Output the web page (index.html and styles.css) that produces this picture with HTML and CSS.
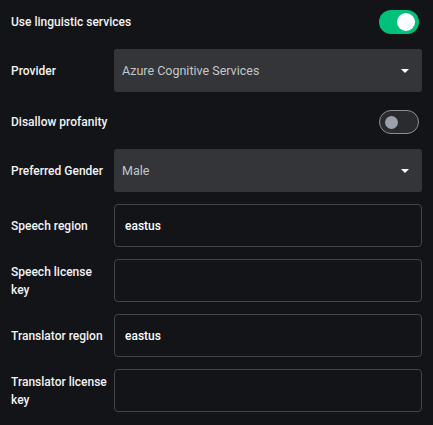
FILE: index.html
```html
<!DOCTYPE html>
<html>
<head>
<meta charset="utf-8">
<link rel="stylesheet" href="styles.css">
</head>
<body>
<div class="panel">
  <div class="row toggle-row">
    <span class="label wide">Use linguistic services</span>
    <span class="switch on"><span class="knob"></span></span>
  </div>
  <div class="row field-row">
    <span class="label">Provider</span>
    <div class="select"><span class="value">Azure Cognitive Services</span><span class="arrow"></span></div>
  </div>
  <div class="row toggle-row">
    <span class="label wide">Disallow profanity</span>
    <span class="switch off"><span class="knob"></span></span>
  </div>
  <div class="row field-row">
    <span class="label">Preferred Gender</span>
    <div class="select"><span class="value">Male</span><span class="arrow"></span></div>
  </div>
  <div class="row field-row">
    <span class="label">Speech region</span>
    <div class="input"><span class="value">eastus</span></div>
  </div>
  <div class="row field-row">
    <span class="label">Speech license key</span>
    <div class="input"></div>
  </div>
  <div class="row field-row">
    <span class="label">Translator region</span>
    <div class="input"><span class="value">eastus</span></div>
  </div>
  <div class="row field-row">
    <span class="label">Translator license key</span>
    <div class="input"></div>
  </div>
</div>
</body>
</html>
```
FILE: styles.css
```css
html, body {
  margin: 0;
  padding: 0;
  background: #131417;
}
.panel {
  font-family: Roboto, "Liberation Sans", Arial, sans-serif;
  font-size: 12px;
  font-weight: 500;
  color: #f1f2f4;
  padding: 4px 11px 0 11px;
  display: flex;
  flex-direction: column;
  gap: 12px;
}
.row {
  display: flex;
  align-items: center;
}
.toggle-row {
  height: 30px;
  padding-top: 3px;
  justify-content: space-between;
}
.field-row {
  height: 43px;
}
.label {
  width: 103px;
  box-sizing: border-box;
  padding-right: 5px;
  flex: none;
  line-height: 18px;
}
.label.wide {
  width: auto;
}
.switch {
  width: 40px;
  height: 24px;
  border-radius: 12px;
  box-sizing: border-box;
  margin-right: 3px;
  display: flex;
  align-items: center;
}
.switch.on {
  background: #00c07a;
  justify-content: flex-end;
  padding-right: 4px;
}
.switch.on .knob {
  width: 18px;
  height: 18px;
  border-radius: 50%;
  background: #ffffff;
}
.switch.off {
  background: #2a2b2e;
  border: 1px solid #8b8e94;
  padding-left: 5px;
}
.switch.off .knob {
  width: 13px;
  height: 13px;
  border-radius: 50%;
  background: #9ba1aa;
}
.select {
  flex: 1;
  height: 43px;
  background: #343538;
  border-radius: 3px;
  display: flex;
  align-items: center;
  justify-content: space-between;
  padding: 0 13px 0 8px;
}
.select .value {
  color: #c3c6cb;
  font-weight: 400;
  font-size: 12.5px;
}
.arrow {
  width: 0;
  height: 0;
  border-left: 4px solid transparent;
  border-right: 4px solid transparent;
  border-top: 4px solid #ffffff;
}
.input {
  flex: 1;
  height: 43px;
  box-sizing: border-box;
  border: 1px solid #434447;
  border-radius: 4px;
  display: flex;
  align-items: center;
  padding-left: 10px;
}
.input .value {
  color: #ffffff;
}
```
